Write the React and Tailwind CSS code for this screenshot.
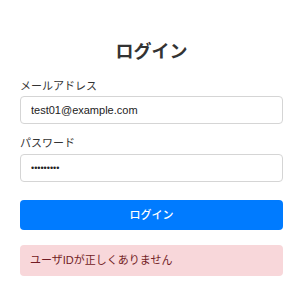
import React from 'react';

const font = { fontFamily: '"Liberation Sans", "Noto Sans CJK JP", sans-serif' };

export default function App() {
    return (
        <div className="w-[300px] h-[300px] bg-white" style={font}>
            <div className="ml-[20px] w-[263px] pt-[40px] flex flex-col">
                <h1 className="text-center text-[18px] leading-[24px] font-bold text-[#333]">ログイン</h1>

                <label className="mt-[14px] text-[11px] leading-[16px] text-[#333]">メールアドレス</label>
                <input
                    type="email"
                    defaultValue="test01@example.com"
                    className="mt-[2px] h-[28px] px-[10px] text-[11px] text-[#222] border border-[#d5d5d5] rounded-[4px] outline-none"
                />

                <label className="mt-[11px] text-[11px] leading-[16px] text-[#333]">パスワード</label>
                <input
                    type="password"
                    defaultValue="password1"
                    className="mt-[3px] h-[28px] px-[10px] text-[9px] text-[#222] border border-[#d5d5d5] rounded-[4px] outline-none"
                />

                <button className="mt-[18px] h-[30px] rounded-[4px] bg-[#007bff] text-white text-[11px] font-medium">
                    ログイン
                </button>

                <div className="mt-[15px] h-[31px] flex items-center px-[10px] rounded-[4px] bg-[#f8d7da] text-[#721c24] text-[11px]">
                    ユーザIDが正しくありません
                </div>
            </div>
        </div>
    );
}
